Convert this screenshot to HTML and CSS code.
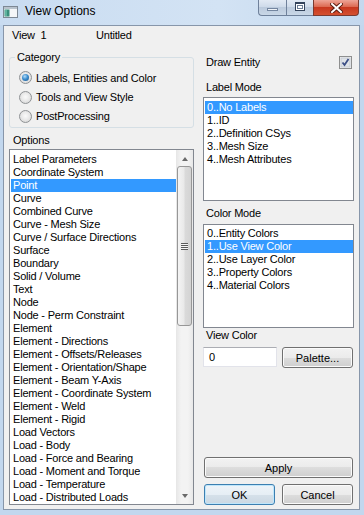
FILE: index.html
```html
<!DOCTYPE html>
<html lang="en">
<head>
  <meta charset="UTF-8" />
  <title>View Options</title>
  <link rel="stylesheet" href="styles.css">
</head>
<body>

<div class="window">

  <!-- caption bar -->
  <div class="titlebar">
    <svg class="appicon" width="15" height="12" viewBox="0 0 15 12">
      <rect x="0.5" y="0.5" width="14" height="11" fill="#f4f6f8" stroke="#7d8894"/>
      <rect x="1" y="1" width="13" height="2" fill="#b9c3cd"/>
      <rect x="1.5" y="3.5" width="5" height="7" fill="#3a8f7c"/>
      <rect x="2" y="4" width="2" height="6" fill="#5fb39f"/>
    </svg>
    <span class="title">View Options</span>
    <div class="caption">
      <span class="cbtn min"><i></i></span>
      <span class="cbtn max"><i></i></span>
      <span class="cbtn close">
        <svg width="13" height="10" viewBox="0 0 13 10">
          <path d="M2 1 L11 9 M11 1 L2 9" stroke="#5e1e12" stroke-width="4" stroke-linecap="square"/>
          <path d="M2 1 L11 9 M11 1 L2 9" stroke="#fff" stroke-width="2" stroke-linecap="square"/>
        </svg>
      </span>
    </div>
  </div>

  <div class="client">

    <!-- left side: view name, category, options list -->
    <div class="col left">
      <div class="viewline"><span class="viewno">View&nbsp; 1</span><span>Untitled</span></div>

      <fieldset class="group">
        <legend>Category</legend>
        <div class="radio-row"><span class="radio on"></span>Labels, Entities and Color</div>
        <div class="radio-row"><span class="radio"></span>Tools and View Style</div>
        <div class="radio-row"><span class="radio"></span>PostProcessing</div>
      </fieldset>

      <div class="lbl opts">Options</div>
      <div class="listbox options">
        <ul>
          <li>Label Parameters</li>
          <li>Coordinate System</li>
          <li class="sel">Point</li>
          <li>Curve</li>
          <li>Combined Curve</li>
          <li>Curve - Mesh Size</li>
          <li>Curve / Surface Directions</li>
          <li>Surface</li>
          <li>Boundary</li>
          <li>Solid / Volume</li>
          <li>Text</li>
          <li>Node</li>
          <li>Node - Perm Constraint</li>
          <li>Element</li>
          <li>Element - Directions</li>
          <li>Element - Offsets/Releases</li>
          <li>Element - Orientation/Shape</li>
          <li>Element - Beam Y-Axis</li>
          <li>Element - Coordinate System</li>
          <li>Element - Weld</li>
          <li>Element - Rigid</li>
          <li>Load Vectors</li>
          <li>Load - Body</li>
          <li>Load - Force and Bearing</li>
          <li>Load - Moment and Torque</li>
          <li>Load - Temperature</li>
          <li>Load - Distributed Loads</li>
        </ul>
        <div class="vscroll">
          <div class="arrow"><b class="up"></b></div>
          <div class="thumb"><span class="grip"></span></div>
          <div class="track"></div>
          <div class="arrow"><b class="down"></b></div>
        </div>
      </div>
    </div>

    <!-- right side: modes and buttons -->
    <div class="col right">
      <div class="drawrow">
        <span>Draw Entity</span>
        <svg class="check" width="13" height="13" viewBox="0 0 13 13">
          <rect x="0.5" y="0.5" width="12" height="12" fill="#f4f4f4" stroke="#8e8f8f"/>
          <rect x="2" y="2" width="9" height="9" fill="#dfe3e8" stroke="#c6ccd4"/>
          <path d="M3.5 6.5 L5.5 9 L9.5 3" fill="none" stroke="#3c4f86" stroke-width="1.8"/>
        </svg>
      </div>

      <div class="lbl mode">Label Mode</div>
      <div class="listbox short">
        <ul>
          <li class="sel">0..No Labels</li>
          <li>1..ID</li>
          <li>2..Definition CSys</li>
          <li>3..Mesh Size</li>
          <li>4..Mesh Attributes</li>
        </ul>
      </div>

      <div class="lbl cmode">Color Mode</div>
      <div class="listbox short cl">
        <ul>
          <li>0..Entity Colors</li>
          <li class="sel">1..Use View Color</li>
          <li>2..Use Layer Color</li>
          <li>3..Property Colors</li>
          <li>4..Material Colors</li>
        </ul>
      </div>

      <div class="lbl">View Color</div>
      <div class="colorrow">
        <div class="textbox">0</div>
        <button class="btn palette">Palette...</button>
      </div>

      <button class="btn apply">Apply</button>
      <div class="okrow">
        <button class="btn default">OK</button>
        <button class="btn">Cancel</button>
      </div>
    </div>

  </div>
</div>

</body>
</html>
```

FILE: styles.css
```css
:root   { --face:#f0f0f0; --sel:#3399ff; --frame:#c2d7ee; }
*       { box-sizing:border-box; margin:0; padding:0; }
body    { width:364px; height:515px; overflow:hidden; background:var(--frame);
          font:11px "Liberation Sans", Arial, sans-serif; color:#000; letter-spacing:-0.2px; }
.window { display:flex; flex-direction:column; height:515px; }

/* caption bar */
.titlebar { height:25px; flex:none; display:flex; align-items:flex-start;
            background:linear-gradient(90deg,#c9dcf1,#d3e3f4 60%,#c4d8ee); }
.appicon  { margin:6px 0 0 3px; }
.title    { font-size:12px; line-height:14px; margin:4px 0 0 7px; letter-spacing:0; }
.caption  { margin-left:auto; margin-right:5px; display:flex; }
.cbtn     { height:16px; border:1px solid #6f819b; border-top:none; display:flex;
            align-items:center; justify-content:center;
            background:linear-gradient(#e2eaf4,#cfdbea 45%,#bccbdd 50%,#c9d7e7); }
.cbtn.min { width:28px; border-radius:0 0 0 4px; border-right:none; }
.cbtn.max { width:27px; border-right:none; }
.cbtn.close { width:46px; border-radius:0 0 4px 0; border-color:#7a3a30;
              background:linear-gradient(#eea597,#dc6a52 45%,#c8381f 50%,#d4502f); }
.min i    { display:block; width:11px; height:3px; margin-top:4px; background:#eef2f7;
            border:1px solid #7486a0; }
.max i    { display:block; width:10px; height:9px; margin-top:-2px; border:1px solid #33435b;
            background:#fff; box-shadow:inset 0 0 0 1px #fff, inset 0 0 0 2px #6a7c95; border-top-width:2px; }

/* client area */
.client { flex:1; margin:0 4px 5px 3px; border:1px solid #8796aa; background:var(--face);
          display:grid; grid-template-columns:186px 151px; column-gap:8px; padding:0 5px 4px; }
.col    { display:flex; flex-direction:column; min-height:0; }

.viewline { padding:1px 0 0 3px; line-height:16px; }
.viewno   { display:inline-block; width:84px; }

.group  { margin:7px 1px 0 0; border:1px solid #d5dfe5; border-radius:3px; padding:4px 0 1px 5px; }
.group legend { padding:0 2px; line-height:14px; }
.radio-row { height:19.4px; display:flex; align-items:center; gap:4px; padding-left:4px; }
.radio  { width:13px; height:13px; border-radius:50%; border:1px solid #8f9295; flex:none;
          background:radial-gradient(circle at 50% 45%,#fafafa 0,#eaeaea 45%,#cfcfcf 100%);
          display:flex; align-items:center; justify-content:center; }
.radio.on::after { content:""; width:7px; height:7px; border-radius:50%;
          background:radial-gradient(circle at 40% 35%,#b6dcf7 0,#3d8fd0 45%,#184f86 100%); }

.lbl      { line-height:14px; padding-left:3px; }
.lbl.opts { margin-top:5px; padding-left:4px; }
.lbl.mode { margin-top:10px; }
.lbl.cmode{ margin-top:5px; }

/* list boxes */
.listbox  { border:1px solid #828790; background:#fff; display:flex; overflow:hidden; }
.listbox ul { flex:1; list-style:none; padding:3px 0 0 1px; }
.listbox li { height:13px; line-height:13px; padding-left:2px; white-space:nowrap; }
.listbox li.sel { background:var(--sel); color:#fff; }
.options  { flex:1; margin:2px 1px 0 0; }
.short    { height:104px; margin-top:3px; }
.short ul { padding-top:3px; }
.short.cl { margin-top:4px; }
.short.cl ul { padding-top:2px; }

/* fake scroll bar */
.vscroll { width:17px; flex:none; display:flex; flex-direction:column;
           background:linear-gradient(90deg,#e6e6e6,#f3f3f3 30%,#f3f3f3 70%,#e8e8e8); }
.arrow   { height:17px; display:flex; align-items:center; justify-content:center; }
.arrow b { width:0; height:0; border-left:3.5px solid transparent; border-right:3.5px solid transparent; }
.arrow .up   { border-bottom:4px solid #6a6a6a; }
.arrow .down { border-top:4px solid #6a6a6a; }
.thumb   { height:160px; margin:-1px 0 0 1px; width:15px; border:1px solid #979797; border-radius:3px;
           background:linear-gradient(90deg,#f4f4f4,#e9e9e9 45%,#dadada 55%,#d3d3d3);
           display:flex; align-items:center; justify-content:center; }
.grip    { width:7px; height:7px;
           background:repeating-linear-gradient(#5c5c5c 0 1px,#f6f6f6 1px 2px); }
.track   { flex:1; }

/* right column */
.drawrow { height:16px; margin-top:28px; padding:0 2px 0 3px; display:flex;
           align-items:center; justify-content:space-between; }
.colorrow { margin-top:5px; display:flex; align-items:flex-start; gap:5px; }
.textbox { width:74px; height:20px; background:#fff; line-height:18px; padding-left:5px;
           border:1px solid #e2e3ea; border-top-color:#abadb3; }

.btn     { font:inherit; color:#000; height:21px; border:1px solid #707070; border-radius:3px;
           background:linear-gradient(#f2f2f2,#ebebeb 50%,#dddddd 50%,#cfcfcf);
           box-shadow:inset 0 0 0 1px #fbfbfb; }
.palette { width:71px; }
.apply   { margin:auto 1px 0; }
.okrow   { margin:6px 1px 0; display:flex; justify-content:space-between; }
.okrow .btn { width:71px; }
.btn.default { border-color:#3c7fb1; box-shadow:inset 0 0 0 1px #bfe6fb;
               background:linear-gradient(#eef4f9,#e6eef5 50%,#d6e1ea 50%,#cbd8e3); }
```
